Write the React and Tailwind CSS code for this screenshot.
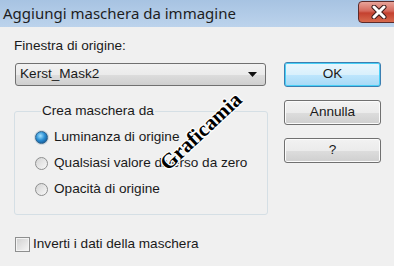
import React from 'react';

const Radio = ({ checked, label }) => (
  <div className="flex items-center h-[26px]">
    <span
      className={
        checked
          ? 'w-[13px] h-[13px] rounded-full border border-[#2c628b] bg-[radial-gradient(circle_at_40%_35%,#9fe0ff_0%,#2b8fd4_45%,#0b3f7a_100%)] shadow-[0_0_0_1px_#cfd6dd]'
          : 'w-[13px] h-[13px] rounded-full border border-[#8e8f8f] bg-[linear-gradient(135deg,#d4d4d4,#f8f8f8)]'
      }
    />
    <span className="ml-[6px]">{label}</span>
  </div>
);

const Button = ({ children, primary }) => (
  <div
    className={
      primary
        ? 'w-[97px] h-[25px] rounded-[3px] border border-[#3c7fb1] shadow-[inset_0_0_0_1px_#48d0f7] bg-[linear-gradient(#eaf6fd_0%,#d9f0fc_50%,#bee6fd_51%,#a7d9f5_100%)] flex items-center justify-center'
        : 'w-[97px] h-[25px] rounded-[3px] border border-[#707070] shadow-[inset_0_0_0_1px_#fbfbfb] bg-[linear-gradient(#f2f2f2_0%,#ebebeb_50%,#dddddd_51%,#cfcfcf_100%)] flex items-center justify-center'
    }
  >
    {children}
  </div>
);

const App = () => {
  return (
    <div className="w-[394px] h-[266px] bg-[#f0f0f0] relative overflow-hidden text-[13.6px] text-[#1a1a1a] font-['Liberation_Sans',sans-serif]">
      {/* title bar */}
      <div className="h-[27px] bg-[linear-gradient(#a7c3e2,#bcd3ec)] flex items-center relative">
        <span className="ml-[3px] text-[15px] text-[#1e1e1e] font-['Noto_Sans',sans-serif]">
          Aggiungi maschera da immagine
        </span>
        <div className="absolute left-[358px] top-[1px] w-[44px] h-[22px] rounded-[4px] border border-[#5c2b2b] bg-[linear-gradient(#e8a49a_0%,#d5695c_45%,#c4412f_55%,#d76a4e_100%)] flex items-center pl-[12px]">
          <svg width="16" height="14" viewBox="0 0 16 14">
            <path d="M3 2 L13 12 M13 2 L3 12" stroke="#3a1a1a" strokeWidth="5" strokeLinecap="round" />
            <path d="M3 2 L13 12 M13 2 L3 12" stroke="#ffffff" strokeWidth="3" strokeLinecap="round" />
          </svg>
        </div>
      </div>

      <div className="flex">
        <div className="ml-[14px] w-[254px]">
          <div className="mt-[11px] leading-[16px]">Finestra di origine:</div>
          <div className="mt-[9px] ml-[1px] w-[251px] h-[23px] rounded-[3px] border border-[#707070] bg-[linear-gradient(#f2f2f2_0%,#ebebeb_50%,#dddddd_51%,#cfcfcf_100%)] flex items-center justify-between pl-[4px] pr-[8px]">
            <span>Kerst_Mask2</span>
            <svg width="9" height="5" viewBox="0 0 9 5">
              <path d="M0 0 H9 L4.5 5 Z" fill="#111" />
            </svg>
          </div>

          <fieldset className="mt-[17px] w-[254px] h-[112px] border border-[#d5dfe5] rounded-[3px] pl-[20px] pt-[5px]">
            <legend className="ml-[6px] px-[1px] leading-[16px]">Crea maschera da</legend>
            <Radio checked label="Luminanza di origine" />
            <Radio label="Qualsiasi valore diverso da zero" />
            <Radio label="Opacità di origine" />
          </fieldset>

          <div className="mt-[21px] ml-[1px] flex items-center h-[16px]">
            <span className="w-[15px] h-[15px] border border-[#8e8f8f] bg-[linear-gradient(135deg,#cfcfcf,#f7f7f7)] shadow-[inset_0_0_0_1px_#f4f4f4]" />
            <span className="ml-[3px]">Inverti i dati della maschera</span>
          </div>
        </div>

        <div className="ml-[16px] pt-[35px] flex flex-col gap-[13px]">
          <Button primary>OK</Button>
          <Button>Annulla</Button>
          <Button>?</Button>
        </div>
      </div>

      {/* watermark */}
      <span className="absolute left-[150px] top-[116px] rotate-[-43deg] text-[21px] font-semibold text-black font-['Liberation_Serif',serif] [text-shadow:1px_1px_0_#fff,-1px_-1px_0_#fff,1px_-1px_0_#fff,-1px_1px_0_#fff] pointer-events-none">
        Graficamia
      </span>
    </div>
  );
};

export default App;
